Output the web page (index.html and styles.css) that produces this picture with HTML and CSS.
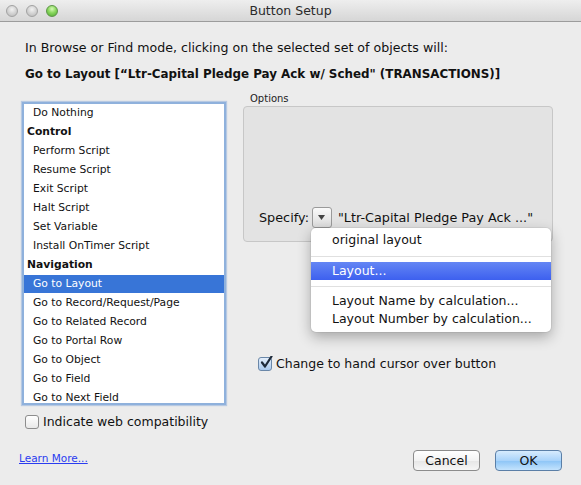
FILE: index.html
```html
<!DOCTYPE html>
<html>
<head>
<meta charset="utf-8">
<link rel="stylesheet" href="styles.css">
</head>
<body>
<div class="window">
  <div class="titlebar">
    <div class="lights">
      <span class="light"></span>
      <span class="light"></span>
      <span class="light green"></span>
    </div>
    <div class="title">Button Setup</div>
    <div></div>
  </div>

  <div class="content">
    <p class="intro">In Browse or Find mode, clicking on the selected set of objects will:</p>
    <p class="action">Go to Layout [“Ltr-Capital Pledge Pay Ack w/ Sched" (TRANSACTIONS)]</p>

    <div class="main">
      <div class="left">
        <div class="list">
          <div class="row item">Do Nothing</div>
          <div class="row head">Control</div>
          <div class="row item">Perform Script</div>
          <div class="row item">Resume Script</div>
          <div class="row item">Exit Script</div>
          <div class="row item">Halt Script</div>
          <div class="row item">Set Variable</div>
          <div class="row item">Install OnTimer Script</div>
          <div class="row head">Navigation</div>
          <div class="row item selected">Go to Layout</div>
          <div class="row item">Go to Record/Request/Page</div>
          <div class="row item">Go to Related Record</div>
          <div class="row item">Go to Portal Row</div>
          <div class="row item">Go to Object</div>
          <div class="row item">Go to Field</div>
          <div class="row item">Go to Next Field</div>
        </div>
        <label class="check web">
          <span class="box"></span>
          <span>Indicate web compatibility</span>
        </label>
      </div>

      <div class="right">
        <div class="options-label">Options</div>
        <div class="options">
          <div class="specify">
            <span>Specify:</span>
            <span class="popbtn">
              <svg width="7" height="5" viewBox="0 0 7 5"><path d="M0 0H7L3.5 5Z" fill="#444"/></svg>
            </span>
            <span class="value">"Ltr-Capital Pledge Pay Ack ..."</span>
          </div>
        </div>
        <label class="check hand">
          <span class="box checked">
            <svg width="14" height="14" viewBox="0 0 14 14"><path d="M3 6.5 L6 10.5 L12.5 0.5" fill="none" stroke="#1d2a3a" stroke-width="2.2" stroke-linejoin="round" stroke-linecap="round"/></svg>
          </span>
          <span>Change to hand cursor over button</span>
        </label>
      </div>
    </div>
  </div>

  <div class="footer">
    <a class="learn" href="#">Learn More...</a>
    <div class="buttons">
      <button class="btn">Cancel</button>
      <button class="btn default">OK</button>
    </div>
  </div>

  <div class="menu">
    <div class="mi">original layout</div>
    <div class="sep"></div>
    <div class="mi hl">Layout...</div>
    <div class="sep sep2"></div>
    <div class="mi">Layout Name by calculation...</div>
    <div class="mi">Layout Number by calculation...</div>
  </div>
</div>
</body>
</html>
```

FILE: styles.css
```css
* { box-sizing: border-box; }
html, body { margin: 0; padding: 0; }
body {
  font-family: "Lucida Grande", "DejaVu Sans", sans-serif;
  color: #111;
  background: #ececec;
}
.window {
  position: relative;
  width: 581px;
  height: 485px;
  background: #ececec;
  display: flex;
  flex-direction: column;
  overflow: hidden;
}
.titlebar {
  height: 22px;
  display: grid;
  grid-template-columns: 1fr auto 1fr;
  align-items: center;
  background: linear-gradient(#eeeeee, #d6d6d6);
  border-bottom: 1px solid #9c9c9c;
}
.lights {
  display: flex;
  gap: 8px;
  padding-left: 6px;
}
.light {
  width: 12px;
  height: 12px;
  border-radius: 50%;
  background: radial-gradient(circle at 50% 35%, #f2f2f2 0, #d6d6d6 45%, #b5b5b5 100%);
  border: 1px solid #a2a2a2;
}
.light.green {
  background: radial-gradient(circle at 50% 30%, #d7f9b8 0, #8ad85e 45%, #4fa832 100%);
  border-color: #5e9548;
}
.title {
  font-size: 12.5px;
  color: #2a2a2a;
}
.content {
  padding-left: 25px;
}
.intro {
  margin: 18px 0 0 0;
  font-size: 12.6px;
  line-height: 15px;
}
.action {
  margin: 12px 0 0 0;
  font-size: 11.9px;
  line-height: 15px;
  font-weight: bold;
}
.main {
  display: flex;
  align-items: flex-start;
  margin-top: 10px;
  margin-left: -3px;
}
.left {
  width: 204px;
  padding-top: 10px;
}
.list {
  height: 303px;
  background: #fff;
  border: 2px solid #8fb1dc;
  box-shadow: 0 0 1px 1px rgba(120, 160, 215, 0.45);
  overflow: hidden;
  font-size: 10.75px;
}
.row {
  height: 19px;
  line-height: 17px;
  white-space: nowrap;
}
.row.item { padding-left: 9px; }
.row.head { padding-left: 3px; font-weight: bold; }
.row.selected {
  background: #3875d7;
  color: #fff;
  height: 18px;
  margin-bottom: 1px;
  line-height: 18px;
}
.check {
  display: flex;
  align-items: center;
  font-size: 12.5px;
  line-height: 15px;
}
.box {
  width: 14px;
  height: 14px;
  border: 1px solid #8d8d8d;
  border-radius: 3px;
  background: linear-gradient(#ffffff, #e9e9e9);
  flex: none;
  position: relative;
}
.box svg { position: absolute; left: 0; top: -2px; }
.box.checked {
  background: linear-gradient(#e3eefb, #a9c9ee);
  border-color: #6a87a8;
}
.check.web {
  margin-top: 9px;
  margin-left: 3px;
  gap: 4px;
}
.right {
  margin-left: 17px;
  width: 310px;
}
.options-label {
  font-size: 10px;
  line-height: 12px;
  padding-left: 7px;
  margin-top: 1px;
  color: #222;
}
.options {
  margin-top: 1px;
  height: 136px;
  background: #e3e3e3;
  border: 1px solid #c7c7c7;
  border-radius: 4px;
  display: flex;
  flex-direction: column;
  justify-content: flex-end;
  padding: 0 0 13px 15px;
}
.specify {
  display: flex;
  align-items: center;
  font-size: 12.8px;
}
.popbtn {
  width: 20px;
  height: 21px;
  margin-left: 3px;
  margin-right: 6px;
  border: 1px solid #9a9a9a;
  border-radius: 3px;
  background: linear-gradient(#fafafa, #dcdcdc);
  display: flex;
  align-items: center;
  justify-content: center;
}
.check.hand {
  margin-top: 114px;
  margin-left: 15px;
  gap: 4px;
}
.footer {
  margin-top: auto;
  display: flex;
  justify-content: space-between;
  align-items: center;
  padding: 0 19px 14px 19px;
}
.learn {
  font-size: 10.5px;
  color: #2a3cf0;
  text-decoration: underline;
  margin-bottom: 5px;
}
.buttons {
  display: flex;
  gap: 15px;
}
.btn {
  width: 67px;
  height: 21px;
  font-family: "Lucida Grande", "DejaVu Sans", sans-serif;
  font-size: 12.5px;
  color: #111;
  border: 1px solid #8c8c8c;
  border-radius: 4px;
  background: linear-gradient(#ffffff 0%, #f3f3f3 50%, #e6e6e6 51%, #f6f6f6 100%);
  padding: 0;
}
.btn.default {
  border-color: #5b7fa7;
  background: linear-gradient(#d7ebfd 0%, #a9d3fa 50%, #8cc4f6 51%, #c3e3fd 100%);
}
.menu {
  position: absolute;
  left: 311px;
  top: 228px;
  width: 240px;
  height: 104px;
  background: #fff;
  border-radius: 5px;
  box-shadow: 0 5px 14px rgba(0, 0, 0, 0.3), 0 0 0 1px rgba(0, 0, 0, 0.05);
  padding-top: 3px;
  font-size: 12.5px;
}
.mi {
  height: 18px;
  line-height: 18px;
  padding-left: 21px;
  white-space: nowrap;
}
.mi.hl {
  background: linear-gradient(#6486f4, #3d60ef);
  color: #fff;
}
.sep {
  height: 1px;
  background: #e0e0e0;
  margin: 7px 0 5px 0;
}
.sep.sep2 { margin: 6px 0 5px 0; }
```
